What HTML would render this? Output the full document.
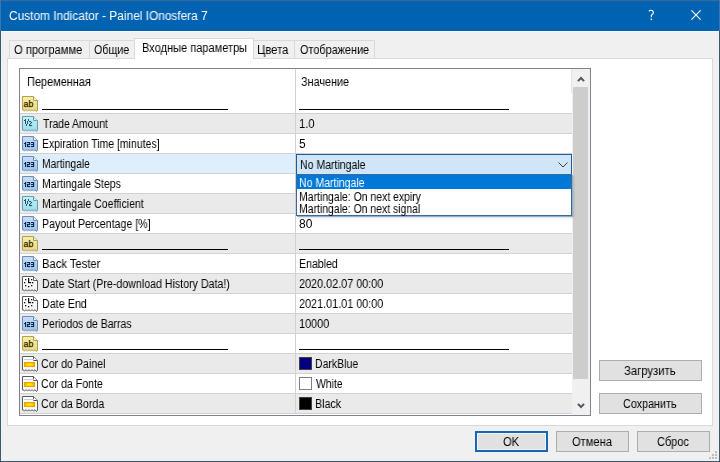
<!DOCTYPE html>
<html><head><meta charset="utf-8"><style>
*{margin:0;padding:0;box-sizing:border-box}
html,body{width:720px;height:462px;overflow:hidden;background:#F0F0F0;font-family:"Liberation Sans",sans-serif;color:#000}
.a{position:absolute}
.tx{white-space:nowrap;line-height:20px;transform-origin:0 0;will-change:transform}
svg{display:block}
</style></head><body>
<svg width="0" height="0" style="position:absolute"><defs><radialGradient id="og" cx="0.5" cy="0.5" r="0.55"><stop offset="0" stop-color="#FFF200"/><stop offset="0.7" stop-color="#FFC800"/><stop offset="1" stop-color="#F59A00"/></radialGradient></defs></svg>
<div class="a " style="left:0px;top:0px;width:720px;height:31px;background:#0063B1"></div>
<div class="a " style="left:0px;top:0px;width:720px;height:1px;background:#3A6A92"></div>
<div class="a " style="left:0px;top:0px;width:1px;height:31px;background:#3F74AE;z-index:20"></div>
<div class="a " style="left:719px;top:0px;width:1px;height:31px;background:#3F74AE;z-index:20"></div>
<div class="a " style="left:1px;top:31px;width:718px;height:1px;background:#F8F8F8"></div>
<svg class="a" style="left:691px;top:10px;z-index:10" width="10" height="10" viewBox="0 0 10 10"><path d="M0.4,0.4 L9.6,9.6 M9.6,0.4 L0.4,9.6" stroke="#fff" stroke-width="1.1"/></svg>
<svg class="a" style="left:646px;top:8px;z-index:10" width="10" height="14" viewBox="0 0 10 14"><path d="M2.8,3.2 Q4.8,1.6 6.6,2.8 Q8.2,4.3 6.6,6.1 L5.3,7.3 V9.2" fill="none" stroke="#fff" stroke-width="1.1"/><rect x="4.6" y="10.6" width="1.5" height="1.5" fill="#fff"/></svg>
<div class="a " style="left:7px;top:58px;width:706px;height:368px;background:#fff;border:1px solid #D9D9D9"></div>
<div class="a " style="left:9px;top:40px;width:81px;height:18px;background:#F0F0F0;border:1px solid #D9D9D9;border-bottom:0;z-index:2"></div>
<div class="a " style="left:89px;top:40px;width:47px;height:18px;background:#F0F0F0;border:1px solid #D9D9D9;border-bottom:0;z-index:2"></div>
<div class="a " style="left:253px;top:40px;width:42px;height:18px;background:#F0F0F0;border:1px solid #D9D9D9;border-bottom:0;z-index:2"></div>
<div class="a " style="left:294px;top:40px;width:81px;height:18px;background:#F0F0F0;border:1px solid #D9D9D9;border-bottom:0;z-index:2"></div>
<div class="a " style="left:134px;top:38px;width:120px;height:21px;background:#fff;border:1px solid #D9D9D9;border-bottom:0;z-index:3"></div>
<div class="a " style="left:19px;top:68px;width:572px;height:348px;background:#fff;border:1px solid #808389;z-index:1"></div>
<div class="a " style="left:20px;top:94px;width:552px;height:19px;background:#FFFFFF;z-index:1"></div>
<div class="a" style="left:22px;top:96px;width:16px;height:16px;z-index:3"><svg width="16" height="16" viewBox="0 0 16 16"><defs><linearGradient id="g_ab" x1="0" y1="0" x2="0" y2="1"><stop offset="0" stop-color="#F8EDA8"/><stop offset="1" stop-color="#EEDA78"/></linearGradient></defs><path d="M0.5,14 V0.5 H11.5 L15.5,4.5 V14 L14.5,15.5 L13,13.8 L11.5,14.8 L10,13.8 L8.5,14.8 L7,13.8 L5.5,14.8 L4,13.8 L2.5,14.8 L1,13.8 L0.5,14 Z" fill="url(#g_ab)" stroke="#AFA055" stroke-width="1"/><path d="M11.5,0.5 V4.5 H15.5" fill="#FFFFFF" fill-opacity="0.7" stroke="#AFA055" stroke-width="1"/><text x="1.6" y="10.9" font-size="8.8" font-family="Liberation Sans" fill="#2E2600" stroke="#2E2600" stroke-width="0.25" letter-spacing="-0.1">ab</text></svg></div>
<div class="a " style="left:42px;top:109px;width:186px;height:1px;background:#000;z-index:3"></div>
<div class="a " style="left:299px;top:109px;width:210px;height:1px;background:#000;z-index:3"></div>
<div class="a " style="left:20px;top:113px;width:552px;height:1px;background:#D2D2D2;z-index:2"></div>
<div class="a " style="left:20px;top:114px;width:552px;height:19px;background:#EAEAEA;z-index:1"></div>
<div class="a" style="left:22px;top:116px;width:16px;height:16px;z-index:3"><svg width="16" height="16" viewBox="0 0 16 16"><defs><linearGradient id="g_half" x1="0" y1="0" x2="0" y2="1"><stop offset="0" stop-color="#C6F0F8"/><stop offset="1" stop-color="#9ADCEC"/></linearGradient></defs><path d="M0.5,14 V0.5 H11.5 L15.5,4.5 V14 L14.5,15.5 L13,13.8 L11.5,14.8 L10,13.8 L8.5,14.8 L7,13.8 L5.5,14.8 L4,13.8 L2.5,14.8 L1,13.8 L0.5,14 Z" fill="url(#g_half)" stroke="#5AA4B6" stroke-width="1"/><path d="M11.5,0.5 V4.5 H15.5" fill="#FFFFFF" fill-opacity="0.7" stroke="#5AA4B6" stroke-width="1"/><rect x="3" y="3" width="1" height="1" fill="#1E5A6A"/><rect x="3" y="4" width="1" height="1" fill="#1E5A6A"/><rect x="3" y="5" width="1" height="1" fill="#1E5A6A"/><rect x="3" y="6" width="1" height="1" fill="#1E5A6A"/><rect x="3" y="7" width="1" height="1" fill="#1E5A6A"/><rect x="2" y="4" width="1" height="1" fill="#1E5A6A"/><rect x="6" y="3" width="1" height="1" fill="#1E5A6A"/><rect x="6" y="4" width="1" height="1" fill="#1E5A6A"/><rect x="5" y="5" width="1" height="1" fill="#1E5A6A"/><rect x="5" y="6" width="1" height="1" fill="#1E5A6A"/><rect x="5" y="7" width="1" height="1" fill="#1E5A6A"/><rect x="4" y="8" width="1" height="1" fill="#1E5A6A"/><rect x="4" y="9" width="1" height="1" fill="#1E5A6A"/><rect x="7" y="5" width="1.1" height="1.1" fill="#1E5A6A"/><rect x="8" y="5" width="1.1" height="1.1" fill="#1E5A6A"/><rect x="9" y="6" width="1.1" height="1.1" fill="#1E5A6A"/><rect x="8" y="7" width="1.1" height="1.1" fill="#1E5A6A"/><rect x="7" y="8" width="1.1" height="1.1" fill="#1E5A6A"/><rect x="7" y="9" width="1.1" height="1.1" fill="#1E5A6A"/><rect x="8" y="9" width="1.1" height="1.1" fill="#1E5A6A"/><rect x="9" y="9" width="1.1" height="1.1" fill="#1E5A6A"/></svg></div>
<div class="a " style="left:20px;top:133px;width:552px;height:1px;background:#D2D2D2;z-index:2"></div>
<div class="a " style="left:20px;top:134px;width:552px;height:19px;background:#FFFFFF;z-index:1"></div>
<div class="a" style="left:22px;top:136px;width:16px;height:16px;z-index:3"><svg width="16" height="16" viewBox="0 0 16 16"><defs><linearGradient id="g_num" x1="0" y1="0" x2="0" y2="1"><stop offset="0" stop-color="#C8DEF6"/><stop offset="1" stop-color="#9CC2EA"/></linearGradient></defs><path d="M0.5,14 V0.5 H11.5 L15.5,4.5 V14 L14.5,15.5 L13,13.8 L11.5,14.8 L10,13.8 L8.5,14.8 L7,13.8 L5.5,14.8 L4,13.8 L2.5,14.8 L1,13.8 L0.5,14 Z" fill="url(#g_num)" stroke="#6A8EB8" stroke-width="1"/><path d="M11.5,0.5 V4.5 H15.5" fill="#FFFFFF" fill-opacity="0.7" stroke="#6A8EB8" stroke-width="1"/><rect x="3" y="6" width="1.15" height="1.05" fill="#0B2A52"/><rect x="2" y="7" width="1.15" height="1.05" fill="#0B2A52"/><rect x="3" y="7" width="1.15" height="1.05" fill="#0B2A52"/><rect x="3" y="8" width="1.15" height="1.05" fill="#0B2A52"/><rect x="3" y="9" width="1.15" height="1.05" fill="#0B2A52"/><rect x="3" y="10" width="1.15" height="1.05" fill="#0B2A52"/><rect x="5" y="6" width="1.15" height="1.05" fill="#0B2A52"/><rect x="6" y="6" width="1.15" height="1.05" fill="#0B2A52"/><rect x="7" y="6" width="1.15" height="1.05" fill="#0B2A52"/><rect x="7" y="7" width="1.15" height="1.05" fill="#0B2A52"/><rect x="5" y="8" width="1.15" height="1.05" fill="#0B2A52"/><rect x="6" y="8" width="1.15" height="1.05" fill="#0B2A52"/><rect x="7" y="8" width="1.15" height="1.05" fill="#0B2A52"/><rect x="5" y="9" width="1.15" height="1.05" fill="#0B2A52"/><rect x="5" y="10" width="1.15" height="1.05" fill="#0B2A52"/><rect x="6" y="10" width="1.15" height="1.05" fill="#0B2A52"/><rect x="7" y="10" width="1.15" height="1.05" fill="#0B2A52"/><rect x="9" y="6" width="1.15" height="1.05" fill="#0B2A52"/><rect x="10" y="6" width="1.15" height="1.05" fill="#0B2A52"/><rect x="11" y="6" width="1.15" height="1.05" fill="#0B2A52"/><rect x="11" y="7" width="1.15" height="1.05" fill="#0B2A52"/><rect x="9" y="8" width="1.15" height="1.05" fill="#0B2A52"/><rect x="10" y="8" width="1.15" height="1.05" fill="#0B2A52"/><rect x="11" y="8" width="1.15" height="1.05" fill="#0B2A52"/><rect x="11" y="9" width="1.15" height="1.05" fill="#0B2A52"/><rect x="9" y="10" width="1.15" height="1.05" fill="#0B2A52"/><rect x="10" y="10" width="1.15" height="1.05" fill="#0B2A52"/><rect x="11" y="10" width="1.15" height="1.05" fill="#0B2A52"/></svg></div>
<div class="a " style="left:20px;top:153px;width:552px;height:1px;background:#D2D2D2;z-index:2"></div>
<div class="a " style="left:20px;top:154px;width:552px;height:19px;background:#DFEEFC;z-index:1"></div>
<div class="a" style="left:22px;top:156px;width:16px;height:16px;z-index:3"><svg width="16" height="16" viewBox="0 0 16 16"><defs><linearGradient id="g_num" x1="0" y1="0" x2="0" y2="1"><stop offset="0" stop-color="#C8DEF6"/><stop offset="1" stop-color="#9CC2EA"/></linearGradient></defs><path d="M0.5,14 V0.5 H11.5 L15.5,4.5 V14 L14.5,15.5 L13,13.8 L11.5,14.8 L10,13.8 L8.5,14.8 L7,13.8 L5.5,14.8 L4,13.8 L2.5,14.8 L1,13.8 L0.5,14 Z" fill="url(#g_num)" stroke="#6A8EB8" stroke-width="1"/><path d="M11.5,0.5 V4.5 H15.5" fill="#FFFFFF" fill-opacity="0.7" stroke="#6A8EB8" stroke-width="1"/><rect x="3" y="6" width="1.15" height="1.05" fill="#0B2A52"/><rect x="2" y="7" width="1.15" height="1.05" fill="#0B2A52"/><rect x="3" y="7" width="1.15" height="1.05" fill="#0B2A52"/><rect x="3" y="8" width="1.15" height="1.05" fill="#0B2A52"/><rect x="3" y="9" width="1.15" height="1.05" fill="#0B2A52"/><rect x="3" y="10" width="1.15" height="1.05" fill="#0B2A52"/><rect x="5" y="6" width="1.15" height="1.05" fill="#0B2A52"/><rect x="6" y="6" width="1.15" height="1.05" fill="#0B2A52"/><rect x="7" y="6" width="1.15" height="1.05" fill="#0B2A52"/><rect x="7" y="7" width="1.15" height="1.05" fill="#0B2A52"/><rect x="5" y="8" width="1.15" height="1.05" fill="#0B2A52"/><rect x="6" y="8" width="1.15" height="1.05" fill="#0B2A52"/><rect x="7" y="8" width="1.15" height="1.05" fill="#0B2A52"/><rect x="5" y="9" width="1.15" height="1.05" fill="#0B2A52"/><rect x="5" y="10" width="1.15" height="1.05" fill="#0B2A52"/><rect x="6" y="10" width="1.15" height="1.05" fill="#0B2A52"/><rect x="7" y="10" width="1.15" height="1.05" fill="#0B2A52"/><rect x="9" y="6" width="1.15" height="1.05" fill="#0B2A52"/><rect x="10" y="6" width="1.15" height="1.05" fill="#0B2A52"/><rect x="11" y="6" width="1.15" height="1.05" fill="#0B2A52"/><rect x="11" y="7" width="1.15" height="1.05" fill="#0B2A52"/><rect x="9" y="8" width="1.15" height="1.05" fill="#0B2A52"/><rect x="10" y="8" width="1.15" height="1.05" fill="#0B2A52"/><rect x="11" y="8" width="1.15" height="1.05" fill="#0B2A52"/><rect x="11" y="9" width="1.15" height="1.05" fill="#0B2A52"/><rect x="9" y="10" width="1.15" height="1.05" fill="#0B2A52"/><rect x="10" y="10" width="1.15" height="1.05" fill="#0B2A52"/><rect x="11" y="10" width="1.15" height="1.05" fill="#0B2A52"/></svg></div>
<div class="a " style="left:20px;top:173px;width:552px;height:1px;background:#D2D2D2;z-index:2"></div>
<div class="a " style="left:20px;top:174px;width:552px;height:19px;background:#FFFFFF;z-index:1"></div>
<div class="a" style="left:22px;top:176px;width:16px;height:16px;z-index:3"><svg width="16" height="16" viewBox="0 0 16 16"><defs><linearGradient id="g_num" x1="0" y1="0" x2="0" y2="1"><stop offset="0" stop-color="#C8DEF6"/><stop offset="1" stop-color="#9CC2EA"/></linearGradient></defs><path d="M0.5,14 V0.5 H11.5 L15.5,4.5 V14 L14.5,15.5 L13,13.8 L11.5,14.8 L10,13.8 L8.5,14.8 L7,13.8 L5.5,14.8 L4,13.8 L2.5,14.8 L1,13.8 L0.5,14 Z" fill="url(#g_num)" stroke="#6A8EB8" stroke-width="1"/><path d="M11.5,0.5 V4.5 H15.5" fill="#FFFFFF" fill-opacity="0.7" stroke="#6A8EB8" stroke-width="1"/><rect x="3" y="6" width="1.15" height="1.05" fill="#0B2A52"/><rect x="2" y="7" width="1.15" height="1.05" fill="#0B2A52"/><rect x="3" y="7" width="1.15" height="1.05" fill="#0B2A52"/><rect x="3" y="8" width="1.15" height="1.05" fill="#0B2A52"/><rect x="3" y="9" width="1.15" height="1.05" fill="#0B2A52"/><rect x="3" y="10" width="1.15" height="1.05" fill="#0B2A52"/><rect x="5" y="6" width="1.15" height="1.05" fill="#0B2A52"/><rect x="6" y="6" width="1.15" height="1.05" fill="#0B2A52"/><rect x="7" y="6" width="1.15" height="1.05" fill="#0B2A52"/><rect x="7" y="7" width="1.15" height="1.05" fill="#0B2A52"/><rect x="5" y="8" width="1.15" height="1.05" fill="#0B2A52"/><rect x="6" y="8" width="1.15" height="1.05" fill="#0B2A52"/><rect x="7" y="8" width="1.15" height="1.05" fill="#0B2A52"/><rect x="5" y="9" width="1.15" height="1.05" fill="#0B2A52"/><rect x="5" y="10" width="1.15" height="1.05" fill="#0B2A52"/><rect x="6" y="10" width="1.15" height="1.05" fill="#0B2A52"/><rect x="7" y="10" width="1.15" height="1.05" fill="#0B2A52"/><rect x="9" y="6" width="1.15" height="1.05" fill="#0B2A52"/><rect x="10" y="6" width="1.15" height="1.05" fill="#0B2A52"/><rect x="11" y="6" width="1.15" height="1.05" fill="#0B2A52"/><rect x="11" y="7" width="1.15" height="1.05" fill="#0B2A52"/><rect x="9" y="8" width="1.15" height="1.05" fill="#0B2A52"/><rect x="10" y="8" width="1.15" height="1.05" fill="#0B2A52"/><rect x="11" y="8" width="1.15" height="1.05" fill="#0B2A52"/><rect x="11" y="9" width="1.15" height="1.05" fill="#0B2A52"/><rect x="9" y="10" width="1.15" height="1.05" fill="#0B2A52"/><rect x="10" y="10" width="1.15" height="1.05" fill="#0B2A52"/><rect x="11" y="10" width="1.15" height="1.05" fill="#0B2A52"/></svg></div>
<div class="a " style="left:20px;top:193px;width:552px;height:1px;background:#D2D2D2;z-index:2"></div>
<div class="a " style="left:20px;top:194px;width:552px;height:19px;background:#EAEAEA;z-index:1"></div>
<div class="a" style="left:22px;top:196px;width:16px;height:16px;z-index:3"><svg width="16" height="16" viewBox="0 0 16 16"><defs><linearGradient id="g_half" x1="0" y1="0" x2="0" y2="1"><stop offset="0" stop-color="#C6F0F8"/><stop offset="1" stop-color="#9ADCEC"/></linearGradient></defs><path d="M0.5,14 V0.5 H11.5 L15.5,4.5 V14 L14.5,15.5 L13,13.8 L11.5,14.8 L10,13.8 L8.5,14.8 L7,13.8 L5.5,14.8 L4,13.8 L2.5,14.8 L1,13.8 L0.5,14 Z" fill="url(#g_half)" stroke="#5AA4B6" stroke-width="1"/><path d="M11.5,0.5 V4.5 H15.5" fill="#FFFFFF" fill-opacity="0.7" stroke="#5AA4B6" stroke-width="1"/><rect x="3" y="3" width="1" height="1" fill="#1E5A6A"/><rect x="3" y="4" width="1" height="1" fill="#1E5A6A"/><rect x="3" y="5" width="1" height="1" fill="#1E5A6A"/><rect x="3" y="6" width="1" height="1" fill="#1E5A6A"/><rect x="3" y="7" width="1" height="1" fill="#1E5A6A"/><rect x="2" y="4" width="1" height="1" fill="#1E5A6A"/><rect x="6" y="3" width="1" height="1" fill="#1E5A6A"/><rect x="6" y="4" width="1" height="1" fill="#1E5A6A"/><rect x="5" y="5" width="1" height="1" fill="#1E5A6A"/><rect x="5" y="6" width="1" height="1" fill="#1E5A6A"/><rect x="5" y="7" width="1" height="1" fill="#1E5A6A"/><rect x="4" y="8" width="1" height="1" fill="#1E5A6A"/><rect x="4" y="9" width="1" height="1" fill="#1E5A6A"/><rect x="7" y="5" width="1.1" height="1.1" fill="#1E5A6A"/><rect x="8" y="5" width="1.1" height="1.1" fill="#1E5A6A"/><rect x="9" y="6" width="1.1" height="1.1" fill="#1E5A6A"/><rect x="8" y="7" width="1.1" height="1.1" fill="#1E5A6A"/><rect x="7" y="8" width="1.1" height="1.1" fill="#1E5A6A"/><rect x="7" y="9" width="1.1" height="1.1" fill="#1E5A6A"/><rect x="8" y="9" width="1.1" height="1.1" fill="#1E5A6A"/><rect x="9" y="9" width="1.1" height="1.1" fill="#1E5A6A"/></svg></div>
<div class="a " style="left:20px;top:213px;width:552px;height:1px;background:#D2D2D2;z-index:2"></div>
<div class="a " style="left:20px;top:214px;width:552px;height:19px;background:#FFFFFF;z-index:1"></div>
<div class="a" style="left:22px;top:216px;width:16px;height:16px;z-index:3"><svg width="16" height="16" viewBox="0 0 16 16"><defs><linearGradient id="g_num" x1="0" y1="0" x2="0" y2="1"><stop offset="0" stop-color="#C8DEF6"/><stop offset="1" stop-color="#9CC2EA"/></linearGradient></defs><path d="M0.5,14 V0.5 H11.5 L15.5,4.5 V14 L14.5,15.5 L13,13.8 L11.5,14.8 L10,13.8 L8.5,14.8 L7,13.8 L5.5,14.8 L4,13.8 L2.5,14.8 L1,13.8 L0.5,14 Z" fill="url(#g_num)" stroke="#6A8EB8" stroke-width="1"/><path d="M11.5,0.5 V4.5 H15.5" fill="#FFFFFF" fill-opacity="0.7" stroke="#6A8EB8" stroke-width="1"/><rect x="3" y="6" width="1.15" height="1.05" fill="#0B2A52"/><rect x="2" y="7" width="1.15" height="1.05" fill="#0B2A52"/><rect x="3" y="7" width="1.15" height="1.05" fill="#0B2A52"/><rect x="3" y="8" width="1.15" height="1.05" fill="#0B2A52"/><rect x="3" y="9" width="1.15" height="1.05" fill="#0B2A52"/><rect x="3" y="10" width="1.15" height="1.05" fill="#0B2A52"/><rect x="5" y="6" width="1.15" height="1.05" fill="#0B2A52"/><rect x="6" y="6" width="1.15" height="1.05" fill="#0B2A52"/><rect x="7" y="6" width="1.15" height="1.05" fill="#0B2A52"/><rect x="7" y="7" width="1.15" height="1.05" fill="#0B2A52"/><rect x="5" y="8" width="1.15" height="1.05" fill="#0B2A52"/><rect x="6" y="8" width="1.15" height="1.05" fill="#0B2A52"/><rect x="7" y="8" width="1.15" height="1.05" fill="#0B2A52"/><rect x="5" y="9" width="1.15" height="1.05" fill="#0B2A52"/><rect x="5" y="10" width="1.15" height="1.05" fill="#0B2A52"/><rect x="6" y="10" width="1.15" height="1.05" fill="#0B2A52"/><rect x="7" y="10" width="1.15" height="1.05" fill="#0B2A52"/><rect x="9" y="6" width="1.15" height="1.05" fill="#0B2A52"/><rect x="10" y="6" width="1.15" height="1.05" fill="#0B2A52"/><rect x="11" y="6" width="1.15" height="1.05" fill="#0B2A52"/><rect x="11" y="7" width="1.15" height="1.05" fill="#0B2A52"/><rect x="9" y="8" width="1.15" height="1.05" fill="#0B2A52"/><rect x="10" y="8" width="1.15" height="1.05" fill="#0B2A52"/><rect x="11" y="8" width="1.15" height="1.05" fill="#0B2A52"/><rect x="11" y="9" width="1.15" height="1.05" fill="#0B2A52"/><rect x="9" y="10" width="1.15" height="1.05" fill="#0B2A52"/><rect x="10" y="10" width="1.15" height="1.05" fill="#0B2A52"/><rect x="11" y="10" width="1.15" height="1.05" fill="#0B2A52"/></svg></div>
<div class="a " style="left:20px;top:233px;width:552px;height:1px;background:#D2D2D2;z-index:2"></div>
<div class="a " style="left:20px;top:234px;width:552px;height:19px;background:#EAEAEA;z-index:1"></div>
<div class="a" style="left:22px;top:236px;width:16px;height:16px;z-index:3"><svg width="16" height="16" viewBox="0 0 16 16"><defs><linearGradient id="g_ab" x1="0" y1="0" x2="0" y2="1"><stop offset="0" stop-color="#F8EDA8"/><stop offset="1" stop-color="#EEDA78"/></linearGradient></defs><path d="M0.5,14 V0.5 H11.5 L15.5,4.5 V14 L14.5,15.5 L13,13.8 L11.5,14.8 L10,13.8 L8.5,14.8 L7,13.8 L5.5,14.8 L4,13.8 L2.5,14.8 L1,13.8 L0.5,14 Z" fill="url(#g_ab)" stroke="#AFA055" stroke-width="1"/><path d="M11.5,0.5 V4.5 H15.5" fill="#FFFFFF" fill-opacity="0.7" stroke="#AFA055" stroke-width="1"/><text x="1.6" y="10.9" font-size="8.8" font-family="Liberation Sans" fill="#2E2600" stroke="#2E2600" stroke-width="0.25" letter-spacing="-0.1">ab</text></svg></div>
<div class="a " style="left:42px;top:249px;width:186px;height:1px;background:#000;z-index:3"></div>
<div class="a " style="left:299px;top:249px;width:210px;height:1px;background:#000;z-index:3"></div>
<div class="a " style="left:20px;top:253px;width:552px;height:1px;background:#D2D2D2;z-index:2"></div>
<div class="a " style="left:20px;top:254px;width:552px;height:19px;background:#FFFFFF;z-index:1"></div>
<div class="a" style="left:22px;top:256px;width:16px;height:16px;z-index:3"><svg width="16" height="16" viewBox="0 0 16 16"><defs><linearGradient id="g_num" x1="0" y1="0" x2="0" y2="1"><stop offset="0" stop-color="#C8DEF6"/><stop offset="1" stop-color="#9CC2EA"/></linearGradient></defs><path d="M0.5,14 V0.5 H11.5 L15.5,4.5 V14 L14.5,15.5 L13,13.8 L11.5,14.8 L10,13.8 L8.5,14.8 L7,13.8 L5.5,14.8 L4,13.8 L2.5,14.8 L1,13.8 L0.5,14 Z" fill="url(#g_num)" stroke="#6A8EB8" stroke-width="1"/><path d="M11.5,0.5 V4.5 H15.5" fill="#FFFFFF" fill-opacity="0.7" stroke="#6A8EB8" stroke-width="1"/><rect x="3" y="6" width="1.15" height="1.05" fill="#0B2A52"/><rect x="2" y="7" width="1.15" height="1.05" fill="#0B2A52"/><rect x="3" y="7" width="1.15" height="1.05" fill="#0B2A52"/><rect x="3" y="8" width="1.15" height="1.05" fill="#0B2A52"/><rect x="3" y="9" width="1.15" height="1.05" fill="#0B2A52"/><rect x="3" y="10" width="1.15" height="1.05" fill="#0B2A52"/><rect x="5" y="6" width="1.15" height="1.05" fill="#0B2A52"/><rect x="6" y="6" width="1.15" height="1.05" fill="#0B2A52"/><rect x="7" y="6" width="1.15" height="1.05" fill="#0B2A52"/><rect x="7" y="7" width="1.15" height="1.05" fill="#0B2A52"/><rect x="5" y="8" width="1.15" height="1.05" fill="#0B2A52"/><rect x="6" y="8" width="1.15" height="1.05" fill="#0B2A52"/><rect x="7" y="8" width="1.15" height="1.05" fill="#0B2A52"/><rect x="5" y="9" width="1.15" height="1.05" fill="#0B2A52"/><rect x="5" y="10" width="1.15" height="1.05" fill="#0B2A52"/><rect x="6" y="10" width="1.15" height="1.05" fill="#0B2A52"/><rect x="7" y="10" width="1.15" height="1.05" fill="#0B2A52"/><rect x="9" y="6" width="1.15" height="1.05" fill="#0B2A52"/><rect x="10" y="6" width="1.15" height="1.05" fill="#0B2A52"/><rect x="11" y="6" width="1.15" height="1.05" fill="#0B2A52"/><rect x="11" y="7" width="1.15" height="1.05" fill="#0B2A52"/><rect x="9" y="8" width="1.15" height="1.05" fill="#0B2A52"/><rect x="10" y="8" width="1.15" height="1.05" fill="#0B2A52"/><rect x="11" y="8" width="1.15" height="1.05" fill="#0B2A52"/><rect x="11" y="9" width="1.15" height="1.05" fill="#0B2A52"/><rect x="9" y="10" width="1.15" height="1.05" fill="#0B2A52"/><rect x="10" y="10" width="1.15" height="1.05" fill="#0B2A52"/><rect x="11" y="10" width="1.15" height="1.05" fill="#0B2A52"/></svg></div>
<div class="a " style="left:20px;top:273px;width:552px;height:1px;background:#D2D2D2;z-index:2"></div>
<div class="a " style="left:20px;top:274px;width:552px;height:19px;background:#EAEAEA;z-index:1"></div>
<div class="a" style="left:22px;top:276px;width:16px;height:16px;z-index:3"><svg width="16" height="16" viewBox="0 0 16 16"><defs><linearGradient id="g_date" x1="0" y1="0" x2="0" y2="1"><stop offset="0" stop-color="#FFFFFF"/><stop offset="1" stop-color="#F4F4F4"/></linearGradient></defs><path d="M0.5,14 V0.5 H11.5 L15.5,4.5 V14 L14.5,15.5 L13,13.8 L11.5,14.8 L10,13.8 L8.5,14.8 L7,13.8 L5.5,14.8 L4,13.8 L2.5,14.8 L1,13.8 L0.5,14 Z" fill="url(#g_date)" stroke="#5C5C5C" stroke-width="1"/><path d="M11.5,0.5 V4.5 H15.5" fill="#FFFFFF" fill-opacity="0.7" stroke="#5C5C5C" stroke-width="1"/><rect x="6" y="2" width="1.2" height="1.2" fill="#111"/><rect x="6" y="3" width="1.2" height="1.2" fill="#111"/><rect x="6" y="4" width="1.2" height="1.2" fill="#111"/><rect x="6" y="5" width="1.2" height="1.2" fill="#111"/><rect x="6" y="6" width="1.2" height="1.2" fill="#111"/><rect x="7" y="6" width="1.2" height="1.2" fill="#111"/><rect x="8" y="6" width="1.2" height="1.2" fill="#111"/><rect x="3" y="3" width="1.3" height="1.3" fill="#111"/><rect x="9" y="3" width="1.3" height="1.3" fill="#111"/><rect x="2" y="6" width="1.3" height="1.3" fill="#111"/><rect x="10" y="6" width="1.3" height="1.3" fill="#111"/><rect x="3" y="9" width="1.3" height="1.3" fill="#111"/><rect x="9" y="9" width="1.3" height="1.3" fill="#111"/><rect x="6" y="10" width="1.3" height="1.3" fill="#111"/></svg></div>
<div class="a " style="left:20px;top:293px;width:552px;height:1px;background:#D2D2D2;z-index:2"></div>
<div class="a " style="left:20px;top:294px;width:552px;height:19px;background:#FFFFFF;z-index:1"></div>
<div class="a" style="left:22px;top:296px;width:16px;height:16px;z-index:3"><svg width="16" height="16" viewBox="0 0 16 16"><defs><linearGradient id="g_date" x1="0" y1="0" x2="0" y2="1"><stop offset="0" stop-color="#FFFFFF"/><stop offset="1" stop-color="#F4F4F4"/></linearGradient></defs><path d="M0.5,14 V0.5 H11.5 L15.5,4.5 V14 L14.5,15.5 L13,13.8 L11.5,14.8 L10,13.8 L8.5,14.8 L7,13.8 L5.5,14.8 L4,13.8 L2.5,14.8 L1,13.8 L0.5,14 Z" fill="url(#g_date)" stroke="#5C5C5C" stroke-width="1"/><path d="M11.5,0.5 V4.5 H15.5" fill="#FFFFFF" fill-opacity="0.7" stroke="#5C5C5C" stroke-width="1"/><rect x="6" y="2" width="1.2" height="1.2" fill="#111"/><rect x="6" y="3" width="1.2" height="1.2" fill="#111"/><rect x="6" y="4" width="1.2" height="1.2" fill="#111"/><rect x="6" y="5" width="1.2" height="1.2" fill="#111"/><rect x="6" y="6" width="1.2" height="1.2" fill="#111"/><rect x="7" y="6" width="1.2" height="1.2" fill="#111"/><rect x="8" y="6" width="1.2" height="1.2" fill="#111"/><rect x="3" y="3" width="1.3" height="1.3" fill="#111"/><rect x="9" y="3" width="1.3" height="1.3" fill="#111"/><rect x="2" y="6" width="1.3" height="1.3" fill="#111"/><rect x="10" y="6" width="1.3" height="1.3" fill="#111"/><rect x="3" y="9" width="1.3" height="1.3" fill="#111"/><rect x="9" y="9" width="1.3" height="1.3" fill="#111"/><rect x="6" y="10" width="1.3" height="1.3" fill="#111"/></svg></div>
<div class="a " style="left:20px;top:313px;width:552px;height:1px;background:#D2D2D2;z-index:2"></div>
<div class="a " style="left:20px;top:314px;width:552px;height:19px;background:#EAEAEA;z-index:1"></div>
<div class="a" style="left:22px;top:316px;width:16px;height:16px;z-index:3"><svg width="16" height="16" viewBox="0 0 16 16"><defs><linearGradient id="g_num" x1="0" y1="0" x2="0" y2="1"><stop offset="0" stop-color="#C8DEF6"/><stop offset="1" stop-color="#9CC2EA"/></linearGradient></defs><path d="M0.5,14 V0.5 H11.5 L15.5,4.5 V14 L14.5,15.5 L13,13.8 L11.5,14.8 L10,13.8 L8.5,14.8 L7,13.8 L5.5,14.8 L4,13.8 L2.5,14.8 L1,13.8 L0.5,14 Z" fill="url(#g_num)" stroke="#6A8EB8" stroke-width="1"/><path d="M11.5,0.5 V4.5 H15.5" fill="#FFFFFF" fill-opacity="0.7" stroke="#6A8EB8" stroke-width="1"/><rect x="3" y="6" width="1.15" height="1.05" fill="#0B2A52"/><rect x="2" y="7" width="1.15" height="1.05" fill="#0B2A52"/><rect x="3" y="7" width="1.15" height="1.05" fill="#0B2A52"/><rect x="3" y="8" width="1.15" height="1.05" fill="#0B2A52"/><rect x="3" y="9" width="1.15" height="1.05" fill="#0B2A52"/><rect x="3" y="10" width="1.15" height="1.05" fill="#0B2A52"/><rect x="5" y="6" width="1.15" height="1.05" fill="#0B2A52"/><rect x="6" y="6" width="1.15" height="1.05" fill="#0B2A52"/><rect x="7" y="6" width="1.15" height="1.05" fill="#0B2A52"/><rect x="7" y="7" width="1.15" height="1.05" fill="#0B2A52"/><rect x="5" y="8" width="1.15" height="1.05" fill="#0B2A52"/><rect x="6" y="8" width="1.15" height="1.05" fill="#0B2A52"/><rect x="7" y="8" width="1.15" height="1.05" fill="#0B2A52"/><rect x="5" y="9" width="1.15" height="1.05" fill="#0B2A52"/><rect x="5" y="10" width="1.15" height="1.05" fill="#0B2A52"/><rect x="6" y="10" width="1.15" height="1.05" fill="#0B2A52"/><rect x="7" y="10" width="1.15" height="1.05" fill="#0B2A52"/><rect x="9" y="6" width="1.15" height="1.05" fill="#0B2A52"/><rect x="10" y="6" width="1.15" height="1.05" fill="#0B2A52"/><rect x="11" y="6" width="1.15" height="1.05" fill="#0B2A52"/><rect x="11" y="7" width="1.15" height="1.05" fill="#0B2A52"/><rect x="9" y="8" width="1.15" height="1.05" fill="#0B2A52"/><rect x="10" y="8" width="1.15" height="1.05" fill="#0B2A52"/><rect x="11" y="8" width="1.15" height="1.05" fill="#0B2A52"/><rect x="11" y="9" width="1.15" height="1.05" fill="#0B2A52"/><rect x="9" y="10" width="1.15" height="1.05" fill="#0B2A52"/><rect x="10" y="10" width="1.15" height="1.05" fill="#0B2A52"/><rect x="11" y="10" width="1.15" height="1.05" fill="#0B2A52"/></svg></div>
<div class="a " style="left:20px;top:333px;width:552px;height:1px;background:#D2D2D2;z-index:2"></div>
<div class="a " style="left:20px;top:334px;width:552px;height:19px;background:#FFFFFF;z-index:1"></div>
<div class="a" style="left:22px;top:336px;width:16px;height:16px;z-index:3"><svg width="16" height="16" viewBox="0 0 16 16"><defs><linearGradient id="g_ab" x1="0" y1="0" x2="0" y2="1"><stop offset="0" stop-color="#F8EDA8"/><stop offset="1" stop-color="#EEDA78"/></linearGradient></defs><path d="M0.5,14 V0.5 H11.5 L15.5,4.5 V14 L14.5,15.5 L13,13.8 L11.5,14.8 L10,13.8 L8.5,14.8 L7,13.8 L5.5,14.8 L4,13.8 L2.5,14.8 L1,13.8 L0.5,14 Z" fill="url(#g_ab)" stroke="#AFA055" stroke-width="1"/><path d="M11.5,0.5 V4.5 H15.5" fill="#FFFFFF" fill-opacity="0.7" stroke="#AFA055" stroke-width="1"/><text x="1.6" y="10.9" font-size="8.8" font-family="Liberation Sans" fill="#2E2600" stroke="#2E2600" stroke-width="0.25" letter-spacing="-0.1">ab</text></svg></div>
<div class="a " style="left:42px;top:349px;width:186px;height:1px;background:#000;z-index:3"></div>
<div class="a " style="left:299px;top:349px;width:210px;height:1px;background:#000;z-index:3"></div>
<div class="a " style="left:20px;top:353px;width:552px;height:1px;background:#D2D2D2;z-index:2"></div>
<div class="a " style="left:20px;top:354px;width:552px;height:19px;background:#EAEAEA;z-index:1"></div>
<div class="a" style="left:22px;top:356px;width:16px;height:16px;z-index:3"><svg width="16" height="16" viewBox="0 0 16 16"><defs><linearGradient id="g_col" x1="0" y1="0" x2="0" y2="1"><stop offset="0" stop-color="#FFFFFF"/><stop offset="1" stop-color="#F6F6F6"/></linearGradient></defs><path d="M0.5,14 V0.5 H11.5 L15.5,4.5 V14 L14.5,15.5 L13,13.8 L11.5,14.8 L10,13.8 L8.5,14.8 L7,13.8 L5.5,14.8 L4,13.8 L2.5,14.8 L1,13.8 L0.5,14 Z" fill="url(#g_col)" stroke="#5C5C5C" stroke-width="1"/><path d="M11.5,0.5 V4.5 H15.5" fill="#FFFFFF" fill-opacity="0.7" stroke="#5C5C5C" stroke-width="1"/><rect x="2" y="3" width="10" height="1" fill="#C8CED8"/><rect x="2.5" y="6.5" width="10" height="4" fill="url(#og)" stroke="#F0A000" stroke-width="1"/></svg></div>
<div class="a " style="left:299px;top:357px;width:13px;height:13px;background:#000080;border:1px solid #404040;z-index:3"></div>
<div class="a " style="left:20px;top:373px;width:552px;height:1px;background:#D2D2D2;z-index:2"></div>
<div class="a " style="left:20px;top:374px;width:552px;height:19px;background:#FFFFFF;z-index:1"></div>
<div class="a" style="left:22px;top:376px;width:16px;height:16px;z-index:3"><svg width="16" height="16" viewBox="0 0 16 16"><defs><linearGradient id="g_col" x1="0" y1="0" x2="0" y2="1"><stop offset="0" stop-color="#FFFFFF"/><stop offset="1" stop-color="#F6F6F6"/></linearGradient></defs><path d="M0.5,14 V0.5 H11.5 L15.5,4.5 V14 L14.5,15.5 L13,13.8 L11.5,14.8 L10,13.8 L8.5,14.8 L7,13.8 L5.5,14.8 L4,13.8 L2.5,14.8 L1,13.8 L0.5,14 Z" fill="url(#g_col)" stroke="#5C5C5C" stroke-width="1"/><path d="M11.5,0.5 V4.5 H15.5" fill="#FFFFFF" fill-opacity="0.7" stroke="#5C5C5C" stroke-width="1"/><rect x="2" y="3" width="10" height="1" fill="#C8CED8"/><rect x="2.5" y="6.5" width="10" height="4" fill="url(#og)" stroke="#F0A000" stroke-width="1"/></svg></div>
<div class="a " style="left:299px;top:377px;width:13px;height:13px;background:#FFFFFF;border:1px solid #808080;z-index:3"></div>
<div class="a " style="left:20px;top:393px;width:552px;height:1px;background:#D2D2D2;z-index:2"></div>
<div class="a " style="left:20px;top:394px;width:552px;height:19px;background:#EAEAEA;z-index:1"></div>
<div class="a" style="left:22px;top:396px;width:16px;height:16px;z-index:3"><svg width="16" height="16" viewBox="0 0 16 16"><defs><linearGradient id="g_col" x1="0" y1="0" x2="0" y2="1"><stop offset="0" stop-color="#FFFFFF"/><stop offset="1" stop-color="#F6F6F6"/></linearGradient></defs><path d="M0.5,14 V0.5 H11.5 L15.5,4.5 V14 L14.5,15.5 L13,13.8 L11.5,14.8 L10,13.8 L8.5,14.8 L7,13.8 L5.5,14.8 L4,13.8 L2.5,14.8 L1,13.8 L0.5,14 Z" fill="url(#g_col)" stroke="#5C5C5C" stroke-width="1"/><path d="M11.5,0.5 V4.5 H15.5" fill="#FFFFFF" fill-opacity="0.7" stroke="#5C5C5C" stroke-width="1"/><rect x="2" y="3" width="10" height="1" fill="#C8CED8"/><rect x="2.5" y="6.5" width="10" height="4" fill="url(#og)" stroke="#F0A000" stroke-width="1"/></svg></div>
<div class="a " style="left:299px;top:397px;width:13px;height:13px;background:#000000;border:1px solid #404040;z-index:3"></div>
<div class="a " style="left:20px;top:413px;width:552px;height:1px;background:#D2D2D2;z-index:2"></div>
<div class="a " style="left:295px;top:69px;width:1px;height:345px;background:#D2D2D2;z-index:2"></div>
<div class="a " style="left:571px;top:69px;width:1px;height:24px;background:#E5E5E5;z-index:2"></div>
<div class="a " style="left:572px;top:69px;width:18px;height:346px;background:#F0F0F0;z-index:2"></div>
<div class="a " style="left:573px;top:87px;width:15px;height:292px;background:#CDCDCD;z-index:3"></div>
<svg class="a" style="left:577px;top:76px;z-index:4" width="8" height="6" viewBox="0 0 8 6"><path d="M0.9,5.1 L4,2 L7.1,5.1" fill="none" stroke="#555" stroke-width="2"/></svg>
<svg class="a" style="left:577px;top:403px;z-index:4" width="8" height="6" viewBox="0 0 8 6"><path d="M0.9,0.9 L4,4 L7.1,0.9" fill="none" stroke="#555" stroke-width="2"/></svg>
<div class="a " style="left:296px;top:154px;width:276px;height:21px;background:#D0E6F8;border:1px solid #1F5A9A;z-index:7"></div>
<svg class="a" style="left:558px;top:162px;z-index:8" width="10" height="6" viewBox="0 0 10 6"><path d="M0.5,0.5 L5,5 L9.5,0.5" fill="none" stroke="#404040" stroke-width="1"/></svg>
<div class="a " style="left:296px;top:174px;width:276px;height:42px;background:#fff;border:1px solid #3C6A98;box-shadow:1px 1px 0 #8FAECB, 2px 2px 2px rgba(0,0,0,0.12);z-index:11"></div>
<div class="a " style="left:297px;top:175px;width:274px;height:14px;background:#0078D7;z-index:11"></div>
<div class="a " style="left:599px;top:360px;width:103px;height:21px;background:#E1E1E1;border:1px solid #ADADAD"></div>
<div class="a " style="left:599px;top:393px;width:103px;height:21px;background:#E1E1E1;border:1px solid #ADADAD"></div>
<div class="a " style="left:475px;top:431px;width:73px;height:21px;background:#E1E1E1;border:2px solid #1567B5;box-shadow:inset 0 0 0 1px #EEF6FC"></div>
<div class="a " style="left:556px;top:431px;width:73px;height:21px;background:#E1E1E1;border:1px solid #ADADAD"></div>
<div class="a " style="left:637px;top:431px;width:73px;height:21px;background:#E1E1E1;border:1px solid #ADADAD"></div>
<div class="a " style="left:715px;top:451px;width:2px;height:2px;background:#BDBDBD;z-index:20"></div>
<div class="a " style="left:712px;top:454px;width:2px;height:2px;background:#BDBDBD;z-index:20"></div>
<div class="a " style="left:715px;top:454px;width:2px;height:2px;background:#BDBDBD;z-index:20"></div>
<div class="a " style="left:709px;top:457px;width:2px;height:2px;background:#BDBDBD;z-index:20"></div>
<div class="a " style="left:712px;top:457px;width:2px;height:2px;background:#BDBDBD;z-index:20"></div>
<div class="a " style="left:715px;top:457px;width:2px;height:2px;background:#BDBDBD;z-index:20"></div>
<div class="a " style="left:0px;top:31px;width:1px;height:431px;background:#3A5A6E;z-index:20"></div>
<div class="a " style="left:719px;top:31px;width:1px;height:431px;background:#3A5A6E;z-index:20"></div>
<div class="a " style="left:0px;top:461px;width:720px;height:1px;background:#3A5A6E;z-index:20"></div>
<div class="a tx" style="left:9.01px;top:6px;font-size:12px;color:#fff;z-index:10;transform:scaleX(0.9899)">Custom Indicator - Painel IOnosfera 7</div>
<div class="a tx" style="left:14.07px;top:40px;font-size:12px;color:#000;z-index:3;transform:scaleX(0.9306)">О программе</div>
<div class="a tx" style="left:94.11px;top:40px;font-size:12px;color:#000;z-index:3;transform:scaleX(0.8947)">Общие</div>
<div class="a tx" style="left:142.08px;top:38px;font-size:12px;color:#000;z-index:3;transform:scaleX(0.9196)">Входные параметры</div>
<div class="a tx" style="left:257.06px;top:40px;font-size:12px;color:#000;z-index:3;transform:scaleX(0.9375)">Цвета</div>
<div class="a tx" style="left:300.09px;top:40px;font-size:12px;color:#000;z-index:3;transform:scaleX(0.9067)">Отображение</div>
<div class="a tx" style="left:27.09px;top:72px;font-size:12px;color:#000;z-index:3;transform:scaleX(0.9118)">Переменная</div>
<div class="a tx" style="left:301.10px;top:72px;font-size:12px;color:#000;z-index:3;transform:scaleX(0.9038)">Значение</div>
<div class="a tx" style="left:43.00px;top:114px;font-size:12px;color:#000;z-index:3;transform:scaleX(0.8667)">Trade Amount</div>
<div class="a tx" style="left:299.07px;top:114px;font-size:12px;color:#000;z-index:3;transform:scaleX(0.9333)">1.0</div>
<div class="a tx" style="left:42.13px;top:134px;font-size:12px;color:#000;z-index:3;transform:scaleX(0.8722)">Expiration Time [minutes]</div>
<div class="a tx" style="left:299.00px;top:134px;font-size:12px;color:#000;z-index:3;transform:scaleX(1.0000)">5</div>
<div class="a tx" style="left:42.15px;top:154px;font-size:12px;color:#000;z-index:3;transform:scaleX(0.8545)">Martingale</div>
<div class="a tx" style="left:42.12px;top:174px;font-size:12px;color:#000;z-index:3;transform:scaleX(0.8764)">Martingale Steps</div>
<div class="a tx" style="left:42.12px;top:194px;font-size:12px;color:#000;z-index:3;transform:scaleX(0.8783)">Martingale Coefficient</div>
<div class="a tx" style="left:42.12px;top:214px;font-size:12px;color:#000;z-index:3;transform:scaleX(0.8843)">Payout Percentage [%]</div>
<div class="a tx" style="left:299.00px;top:214px;font-size:12px;color:#000;z-index:3;transform:scaleX(1.0000)">80</div>
<div class="a tx" style="left:42.07px;top:254px;font-size:12px;color:#000;z-index:3;transform:scaleX(0.9344)">Back Tester</div>
<div class="a tx" style="left:299.12px;top:254px;font-size:12px;color:#000;z-index:3;transform:scaleX(0.8810)">Enabled</div>
<div class="a tx" style="left:42.11px;top:274px;font-size:12px;color:#000;z-index:3;transform:scaleX(0.8857)">Date Start (Pre-download History Data!)</div>
<div class="a tx" style="left:299.10px;top:274px;font-size:12px;color:#000;z-index:3;transform:scaleX(0.9022)">2020.02.07 00:00</div>
<div class="a tx" style="left:42.10px;top:294px;font-size:12px;color:#000;z-index:3;transform:scaleX(0.8958)">Date End</div>
<div class="a tx" style="left:299.10px;top:294px;font-size:12px;color:#000;z-index:3;transform:scaleX(0.9022)">2021.01.01 00:00</div>
<div class="a tx" style="left:42.13px;top:314px;font-size:12px;color:#000;z-index:3;transform:scaleX(0.8713)">Periodos de Barras</div>
<div class="a tx" style="left:299.09px;top:314px;font-size:12px;color:#000;z-index:3;transform:scaleX(0.9062)">10000</div>
<div class="a tx" style="left:41.11px;top:354px;font-size:12px;color:#000;z-index:3;transform:scaleX(0.8873)">Cor do Painel</div>
<div class="a tx" style="left:315.12px;top:354px;font-size:12px;color:#000;z-index:3;transform:scaleX(0.8750)">DarkBlue</div>
<div class="a tx" style="left:41.12px;top:374px;font-size:12px;color:#000;z-index:3;transform:scaleX(0.8841)">Cor da Fonte</div>
<div class="a tx" style="left:316.00px;top:374px;font-size:12px;color:#000;z-index:3;transform:scaleX(0.8667)">White</div>
<div class="a tx" style="left:41.11px;top:394px;font-size:12px;color:#000;z-index:3;transform:scaleX(0.8857)">Cor da Borda</div>
<div class="a tx" style="left:315.11px;top:394px;font-size:12px;color:#000;z-index:3;transform:scaleX(0.8929)">Black</div>
<div class="a tx" style="left:300.12px;top:155px;font-size:12px;color:#000;z-index:8;transform:scaleX(0.8767)">No Martingale</div>
<div class="a tx" style="left:299.12px;top:173px;font-size:12px;color:#fff;z-index:12;transform:scaleX(0.8767)">No Martingale</div>
<div class="a tx" style="left:299.13px;top:187px;font-size:12px;color:#000;z-index:12;transform:scaleX(0.8705)">Martingale: On next expiry</div>
<div class="a tx" style="left:299.13px;top:199px;font-size:12px;color:#000;z-index:12;transform:scaleX(0.8696)">Martingale: On next signal</div>
<div class="a tx" style="left:624.06px;top:361px;font-size:12px;color:#000;z-index:3;transform:scaleX(0.9434)">Загрузить</div>
<div class="a tx" style="left:623.10px;top:394px;font-size:12px;color:#000;z-index:3;transform:scaleX(0.8966)">Сохранить</div>
<div class="a tx" style="left:503.06px;top:432px;font-size:12px;color:#000;z-index:3;transform:scaleX(0.9375)">OK</div>
<div class="a tx" style="left:572.07px;top:432px;font-size:12px;color:#000;z-index:3;transform:scaleX(0.9286)">Отмена</div>
<div class="a tx" style="left:657.09px;top:432px;font-size:12px;color:#000;z-index:3;transform:scaleX(0.9118)">Сброс</div>
</body></html>
